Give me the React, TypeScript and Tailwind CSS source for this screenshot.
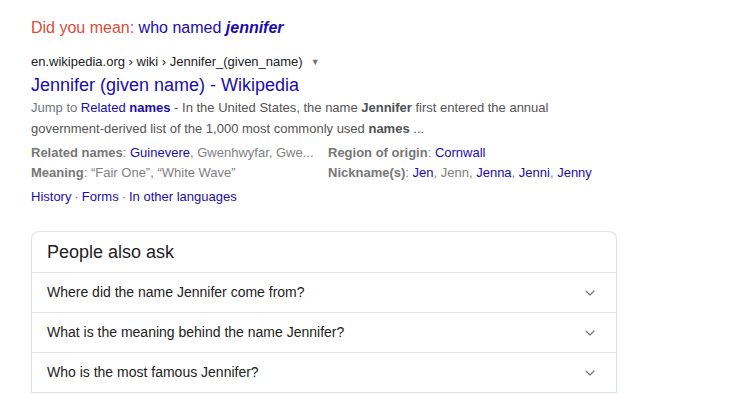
import { ChevronDown } from "lucide-react";

const questions = [
  "Where did the name Jennifer come from?",
  "What is the meaning behind the name Jennifer?",
  "Who is the most famous Jennifer?",
  "What is the origin of the name Jennifer?",
];

const Sep = () => <span className="mx-[3px] text-[#70757a]">·</span>;

export default function App() {
  return (
    <div className="h-[393px] w-[730px] overflow-hidden bg-white pl-[31px] pt-[17px] font-['Liberation_Sans',Arial,sans-serif]">
      {/* Did you mean */}
      <p className="text-[16px] leading-[22px]">
        <span className="text-[#dd4b39]">Did you mean: </span>
        <a className="text-[#1a0dab]">
          who named <b className="italic">jennifer</b>
        </a>
      </p>

      {/* Result */}
      <div className="mt-[14px] w-[570px]">
        <div className="flex items-center text-[13px] leading-[18px] text-[#202124]">
          <span>en.wikipedia.org › wiki › Jennifer_(given_name)</span>
          <span className="ml-[8px] text-[9px] text-[#70757a]">▼</span>
        </div>
        <h3 className="mt-[2px] text-[18px] leading-[24px] text-[#1a0dab]">
          Jennifer (given name) - Wikipedia
        </h3>
        <p className="text-[13px] leading-[21px] text-[#545454]">
          <span className="text-[#70757a]">Jump to </span>
          <a className="text-[#1a0dab]">
            Related <b>names</b>
          </a>{" "}
          - In the United States, the name <b className="text-[#4d5156]">Jennifer</b> first entered the annual
          government-derived list of the 1,000 most commonly used <b className="text-[#4d5156]">names</b> ...
        </p>

        <div className="mt-[4px] grid grid-cols-[297px_1fr] text-[13px] leading-[20px] text-[#808080]">
          <div className="truncate">
            <b className="text-[#777]">Related names</b>: <a className="text-[#1a0dab]">Guinevere</a>,
            Gwenhwyfar, Gwe...
          </div>
          <div>
            <b className="text-[#777]">Region of origin</b>: <a className="text-[#1a0dab]">Cornwall</a>
          </div>
          <div>
            <b className="text-[#777]">Meaning</b>: “Fair One”, “White Wave”
          </div>
          <div>
            <b className="text-[#777]">Nickname(s)</b>: <a className="text-[#1a0dab]">Jen</a>, Jenn,{" "}
            <a className="text-[#1a0dab]">Jenna</a>, <a className="text-[#1a0dab]">Jenni</a>,{" "}
            <a className="text-[#1a0dab]">Jenny</a>
          </div>
        </div>

        <div className="mt-[4px] text-[13px] leading-[20px] text-[#1a0dab]">
          <a>History</a>
          <Sep />
          <a>Forms</a>
          <Sep />
          <a>In other languages</a>
        </div>
      </div>

      {/* People also ask */}
      <div className="mt-[24px] w-[586px] rounded-t-[8px] border border-b-0 border-[#dfe1e5]">
        <div className="flex h-[40px] items-center px-[15px] text-[18px] text-[#222]">People also ask</div>
        {questions.map((q) => (
          <div
            key={q}
            className="flex h-[40px] items-center justify-between border-t border-[#dfe1e5] pl-[15px] pr-[18px] text-[14px] text-[#222]"
          >
            <span>{q}</span>
            <ChevronDown size={16} strokeWidth={1.75} className="text-[#70757a]" />
          </div>
        ))}
      </div>
    </div>
  );
}
